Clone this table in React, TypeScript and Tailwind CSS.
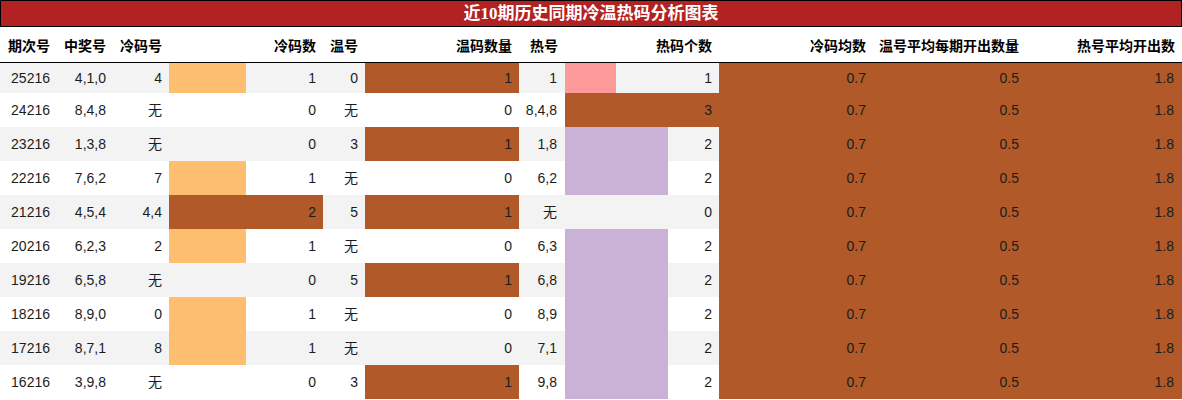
import React from 'react';

const font = { fontFamily: '"Liberation Sans", "Noto Sans CJK SC", sans-serif' };

const widths = [57, 56, 56, 154, 42, 154, 46, 154, 154, 153, 156];

const headers = ['期次号', '中奖号', '冷码号', '冷码数', '温号', '温码数量', '热号', '热码个数', '冷码均数', '温号平均每期开出数量', '热号平均开出数'];

type Row = [string, string, string, number, string, number, string, number];

const rows: Row[] = [
  ['25216', '4,1,0', '4', 1, '0', 1, '1', 1],
  ['24216', '8,4,8', '无', 0, '无', 0, '8,4,8', 3],
  ['23216', '1,3,8', '无', 0, '3', 1, '1,8', 2],
  ['22216', '7,6,2', '7', 1, '无', 0, '6,2', 2],
  ['21216', '4,5,4', '4,4', 2, '5', 1, '无', 0],
  ['20216', '6,2,3', '2', 1, '无', 0, '6,3', 2],
  ['19216', '6,5,8', '无', 0, '5', 1, '6,8', 2],
  ['18216', '8,9,0', '0', 1, '无', 0, '8,9', 2],
  ['17216', '8,7,1', '8', 1, '无', 0, '7,1', 2],
  ['16216', '3,9,8', '无', 0, '3', 1, '9,8', 2],
];

const coldColor: Record<number, string> = { 1: '#fdbf6f', 2: '#b15928' };
const warmColor: Record<number, string> = { 1: '#b15928' };
const hotColor: Record<number, string> = { 1: '#fb9a99', 2: '#cab2d6', 3: '#b15928' };

const Cell: React.FC<{ w: number; children?: React.ReactNode; className?: string }> = ({ w, children, className = '' }) => (
  <div className={`shrink-0 h-full flex items-center justify-end pr-[7px] ${className}`} style={{ width: w }}>
    {children}
  </div>
);

const BarCell: React.FC<{ w: number; value: number; max: number; colors: Record<number, string> }> = ({ w, value, max, colors }) => (
  <div className="shrink-0 h-full relative flex items-center justify-end pr-[7px]" style={{ width: w }}>
    {value > 0 && (
      <div className="absolute left-0 top-0 bottom-0" style={{ width: `${(value / max) * 100}%`, backgroundColor: colors[value] }} />
    )}
    <span className="relative">{value}</span>
  </div>
);

export default function App() {
  return (
    <div className="w-[1182px] h-[400px] bg-white text-[14px] text-[#1c1c1c] overflow-hidden" style={font}>
      <div
        className="h-[27px] border border-black bg-[#b22222] text-white font-bold text-[17px] flex items-center justify-center"
        style={{ fontFamily: '"Liberation Serif", "Noto Sans CJK SC", serif' }}
      >
        近10期历史同期冷温热码分析图表
      </div>

      <div className="flex h-[36px] border-b border-black font-bold text-black pt-[3px]">
        {headers.map((h, i) => (
          <Cell key={h} w={widths[i]} className="whitespace-nowrap">
            {h}
          </Cell>
        ))}
      </div>

      {rows.map((r, idx) => (
        <div key={r[0]} className={`flex ${idx === 0 ? 'h-[30px]' : 'h-[34px]'} ${idx % 2 === 0 ? 'bg-[#f3f3f3]' : 'bg-white'}`}>
          <Cell w={widths[0]}>{r[0]}</Cell>
          <Cell w={widths[1]}>{r[1]}</Cell>
          <Cell w={widths[2]}>{r[2]}</Cell>
          <BarCell w={widths[3]} value={r[3]} max={2} colors={coldColor} />
          <Cell w={widths[4]}>{r[4]}</Cell>
          <BarCell w={widths[5]} value={r[5]} max={1} colors={warmColor} />
          <Cell w={widths[6]} className="pr-[8px]">{r[6]}</Cell>
          <BarCell w={widths[7]} value={r[7]} max={3} colors={hotColor} />
          <div className="flex flex-1 h-full bg-[#b15928]">
            <Cell w={widths[8]}>0.7</Cell>
            <Cell w={widths[9]}>0.5</Cell>
            <Cell w={widths[10]} className="pr-[8px]">1.8</Cell>
          </div>
        </div>
      ))}
    </div>
  );
}
